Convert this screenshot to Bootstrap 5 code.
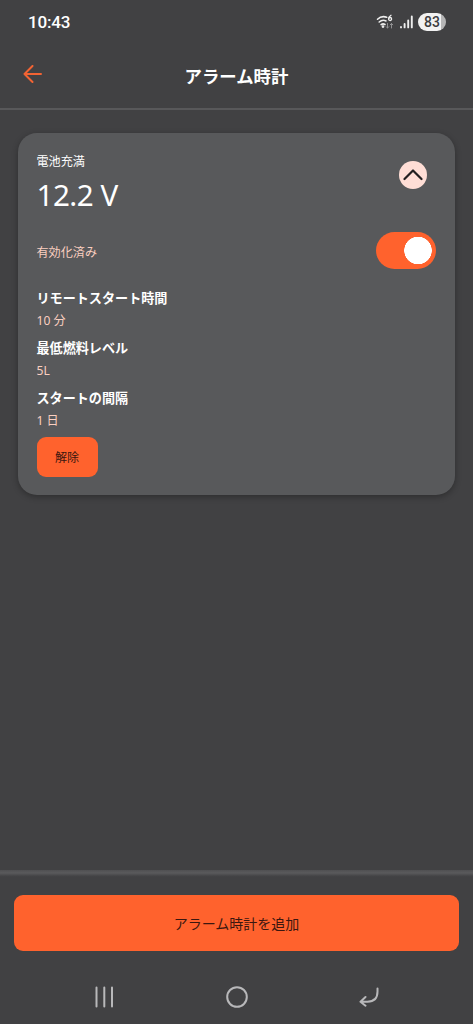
<!DOCTYPE html>
<html lang="ja">
<head>
<meta charset="utf-8">
<meta name="viewport" content="width=device-width, initial-scale=1">
<title>アラーム時計</title>
<link href="https://cdn.jsdelivr.net/npm/bootstrap@5.3.0/dist/css/bootstrap.min.css" rel="stylesheet">
<style>
  body { background: #414143; color: #fff; font-family: "Noto Sans", "Noto Sans CJK JP", sans-serif; height: 1024px; overflow: hidden; }
  svg { display: block; flex: none; }
  .status-bar { height: 44px; padding: 0 27px 0 28px; font-family: Roboto, sans-serif; }
  .clock { font-size: 17px; font-weight: 500; line-height: 20px; letter-spacing: -.2px; }
  .battery { width: 28px; height: 18px; margin-left: 5px; border-radius: 9px; background: linear-gradient(90deg, #f2f2f2 83%, #b5b5b6 83%); color: #3c3c3e; font-size: 14px; font-weight: 500; line-height: 18px; }
  .app-bar { height: 66px; border-bottom: 2px solid #58585a; padding: 0 23px; }
  .app-title { font-size: 17.4px; font-weight: 700; line-height: 24px; }
  .side-slot { width: 20px; margin-bottom: 3px; }
  .alarm-card { --bs-card-bg: #58595b; --bs-card-color: #fff; --bs-card-border-width: 0; --bs-card-border-radius: 19px; height: 362px; margin: 23px 18px 0; padding: 0 18.5px; box-shadow: 0 2px 6px rgba(0,0,0,.3); }
  .cap { font-size: 12.1px; line-height: 18px; }
  .volt { font-size: 29.6px; line-height: 40px; letter-spacing: -.5px; margin-top: 4px; }
  .peach { color: #fbcfc0; }
  .toggle-up { width: 28px; height: 28px; background: #ffded6; margin: 28px 10px 0 0; }
  .switch-row { height: 38px; margin: 16px 0 0; }
  .switch-row .cap { padding-top: 6px; }
  .form-switch .power { width: 60px; height: 37px; margin: 0 1px 0 0; border: 0; border-radius: 19px; background: #ff622d radial-gradient(circle 14px at 42px 18.5px, #fff 13.5px, transparent 14px); box-shadow: none; }
  .details { padding-top: 17px; }
  .details dt { font-size: 13.1px; line-height: 24px; height: 24px; }
  .details dd { font-size: 12.1px; line-height: 22px; height: 26px; margin: 0; }
  .btn-flame { --bs-btn-bg: #ff622d; --bs-btn-color: #3b1710; --bs-btn-border-width: 0; --bs-btn-hover-bg: #f45a27; --bs-btn-active-bg: #e95220; --bs-btn-padding-x: 0; --bs-btn-padding-y: 0; }
  .release { width: 61px; height: 40px; margin-top: 1px; padding-top: 2px; font-size: 12.1px; border-radius: 9px; }
  .bottom-bar { height: 154px; padding: 25px 14px 0; background: linear-gradient(#505052, #5a5a5c 3px, #444446 6px, #414143 7px); }
  .add { height: 56px; font-size: 14px; border-radius: 9px; }
  .system-nav { height: 73px; padding: 18px 80px 0 81px; }
</style>
</head>
<body class="d-flex flex-column">
  <div class="status-bar d-flex align-items-center justify-content-between">
    <span class="clock">10:43</span>
    <div class="d-flex align-items-center">
      <svg width="20" height="16" viewBox="0 0 20 16" fill="none" stroke="#eee" stroke-width="1.6" stroke-linecap="round">
        <path d="M1.5 5.2Q5.5 1.3 10.7 3.2M3.2 8Q6.5 5.2 10 7M5.1 10.6Q7 9.2 9 10.5"/>
        <circle cx="7" cy="12.6" r=".6" fill="#eee"/>
        <path d="M15 1.3Q12.5 2.8 12.5 5" stroke-width="1.3"/><circle cx="14.1" cy="5" r="1.5" stroke-width="1.3"/>
        <path d="M11.5 9.5V14M10.2 12.7l1.3 1.3 1.3-1.3M15.5 14V9.5M14.2 10.8l1.3-1.3 1.3 1.3" stroke="#909092" stroke-width="1"/>
      </svg>
      <svg width="13" height="14" viewBox="0 0 13 14" class="ms-1" fill="none" stroke="#eee" stroke-width="1.9" stroke-linecap="round">
        <path d="M1 12v.4M4.6 9v3.4M8.2 5.5v6.9M11.8 1.5v10.9"/>
      </svg>
      <span class="battery text-center">83</span>
    </div>
  </div>

  <header class="app-bar d-flex align-items-center justify-content-between">
    <a href="#" class="side-slot" aria-label="戻る">
      <svg width="20" height="20" viewBox="0 0 20 20" fill="none" stroke="#f26333" stroke-width="2" stroke-linecap="round" stroke-linejoin="round"><path d="M18 9H1.5M9.5 1L1.5 9l8 8"/></svg>
    </a>
    <h1 class="app-title m-0">アラーム時計</h1>
    <span class="side-slot"></span>
  </header>

  <main class="flex-grow-1">
    <section class="card alarm-card">
      <div class="d-flex justify-content-between">
        <div>
          <div class="cap mt-3 pt-1">電池充満</div>
          <div class="volt">12.2 V</div>
        </div>
        <button class="toggle-up btn p-0 border-0 rounded-circle d-flex align-items-center justify-content-center" aria-label="閉じる">
          <svg width="20" height="12" viewBox="0 0 20 12" fill="none" stroke="#242021" stroke-width="2.2" stroke-linecap="round" stroke-linejoin="round"><path d="M1.5 10L10 1.5l8.500 8.500"/></svg>
        </button>
      </div>
      <div class="switch-row d-flex align-items-center justify-content-between">
        <label class="cap peach" for="power">有効化済み</label>
        <div class="form-switch p-0 m-0 d-flex"><input class="form-check-input power" id="power" type="checkbox" role="switch" checked></div>
      </div>
      <dl class="details m-0">
        <dt>リモートスタート時間</dt><dd class="peach">10 分</dd>
        <dt>最低燃料レベル</dt><dd class="peach">5L</dd>
        <dt>スタートの間隔</dt><dd class="peach">1 日</dd>
      </dl>
      <button class="btn btn-flame release">解除</button>
    </section>
  </main>

  <footer class="bottom-bar">
    <button class="btn btn-flame add w-100 d-block">アラーム時計を追加</button>
    <nav class="system-nav d-flex align-items-center justify-content-between">
      <svg width="19" height="22" viewBox="0 0 19 22" stroke="#b8b8ba" stroke-width="2" stroke-linecap="round"><path d="M1.500 1.500v19M9.300 1.500v19M17 1.500v19"/></svg>
      <svg width="22" height="22" viewBox="0 0 22 22" fill="none" stroke="#b8b8ba" stroke-width="2"><circle cx="11" cy="11" r="9.800"/></svg>
      <svg width="20" height="20" viewBox="0 0 20 20" fill="none" stroke="#b8b8ba" stroke-width="2" stroke-linecap="round" stroke-linejoin="round"><path d="M18.500 1.500v3q0 10.200-10 10.200H1.500M6.500 10L1.500 14.700l5 4"/></svg>
    </nav>
  </footer>
  <script src="https://cdn.jsdelivr.net/npm/bootstrap@5.3.0/dist/js/bootstrap.bundle.min.js"></script>
</body>
</html>
